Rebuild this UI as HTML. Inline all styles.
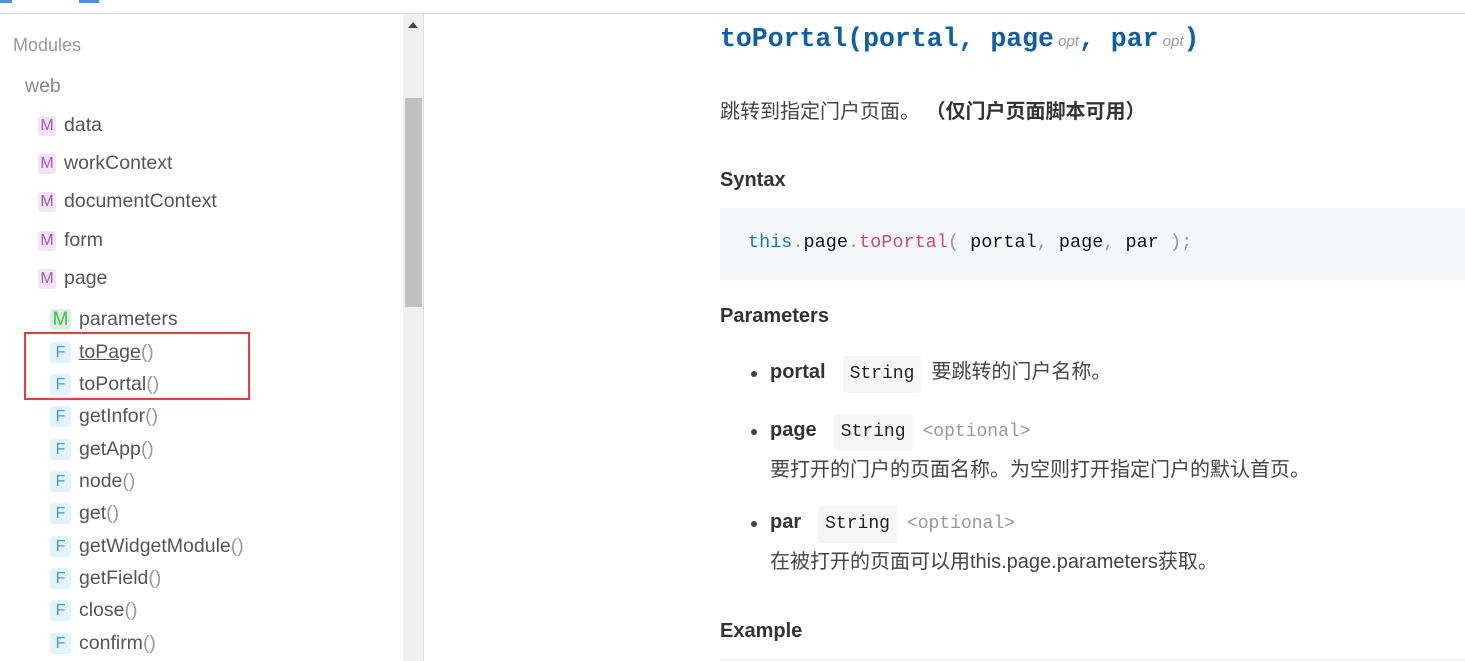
<!DOCTYPE html>
<html><head><meta charset="utf-8"><style>
*{margin:0;padding:0;box-sizing:border-box}
body{width:1465px;height:661px;overflow:hidden;background:#fff;position:relative;font-family:"Liberation Sans","Noto Sans CJK SC",sans-serif;color:#444}
.a{position:absolute;white-space:nowrap}
.top{position:absolute;left:0;top:13px;width:1465px;height:1px;background:#ddd}
.sb{position:absolute;left:403px;top:14px;width:21px;height:647px;background:#f0f0f0;border-right:1px solid #ddd}
.th{position:absolute;left:405px;top:98px;width:17px;height:209px;background:#c1c1c1}
.nav{font-size:19.5px;color:#555}
.ic{display:inline-block;width:18px;height:20px;line-height:20px;text-align:center;font-size:16px;border-radius:3px;margin-right:8px;vertical-align:middle}
.m{background:#f3e3f6;color:#a05cbf}
.mg{background:#d8f2dc;color:#3cba54;width:21px;height:21px;font-size:19px;line-height:21px}
.f{background:#e1f3fc;color:#4a9ad1;width:21px;height:21px;line-height:21px}
.mono{font-family:"Liberation Mono",monospace}
.h{font-size:20px;font-weight:bold;color:#333}
.code{position:absolute;left:720px;top:208px;width:745px;height:72px;background:#f6f7f9}
.tag{display:inline-block;background:#f6f6f6;border-radius:3px;padding:0 7px;font-family:"Liberation Mono",monospace;font-size:18px;height:37px;line-height:37px;color:#222;margin:0 10px 0 17px}
.opt{font-family:"Liberation Mono",monospace;font-size:18px;color:#999}
.dot{position:absolute;width:6px;height:6px;border-radius:3px;background:#444}
.cn{font-size:20px}
</style></head><body>
<div class="a" style="left:0;top:0;width:12px;height:3px;background:#4a90e2"></div>
<div class="a" style="left:79px;top:0;width:20px;height:3px;background:#4a90e2"></div>
<div class="top"></div>
<div class="sb"></div><div class="th"></div>
<div class="a" style="left:408px;top:22px;width:0;height:0;border-left:5px solid transparent;border-right:5px solid transparent;border-bottom:6px solid #444"></div>

<div class="a" style="left:13px;top:35px;font-size:18px;color:#999">Modules</div>
<div class="a" style="left:25px;top:75px;font-size:19.5px;color:#888">web</div>
<div class="a nav" style="left:38px;top:114px"><span class="ic m">M</span>data</div>
<div class="a nav" style="left:38px;top:152px"><span class="ic m">M</span>workContext</div>
<div class="a nav" style="left:38px;top:190px"><span class="ic m">M</span>documentContext</div>
<div class="a nav" style="left:38px;top:229px"><span class="ic m">M</span>form</div>
<div class="a nav" style="left:38px;top:267px"><span class="ic m">M</span>page</div>
<div class="a nav" style="left:50px;top:308px"><span class="ic mg">M</span>parameters</div>
<div class="a" style="left:24px;top:332px;width:226px;height:68px;border:2px solid #f03a3a"></div>
<div class="a nav" style="left:50px;top:341px"><span class="ic f">F</span><u>toPage</u><span style="color:#999">()</span></div>
<div class="a nav" style="left:50px;top:373px"><span class="ic f">F</span>toPortal<span style="color:#999">()</span></div>
<div class="a nav" style="left:50px;top:405px"><span class="ic f">F</span>getInfor<span style="color:#999">()</span></div>
<div class="a nav" style="left:50px;top:438px"><span class="ic f">F</span>getApp<span style="color:#999">()</span></div>
<div class="a nav" style="left:50px;top:470px"><span class="ic f">F</span>node<span style="color:#999">()</span></div>
<div class="a nav" style="left:50px;top:502px"><span class="ic f">F</span>get<span style="color:#999">()</span></div>
<div class="a nav" style="left:50px;top:535px"><span class="ic f">F</span>getWidgetModule<span style="color:#999">()</span></div>
<div class="a nav" style="left:50px;top:567px"><span class="ic f">F</span>getField<span style="color:#999">()</span></div>
<div class="a nav" style="left:50px;top:599px"><span class="ic f">F</span>close<span style="color:#999">()</span></div>
<div class="a nav" style="left:50px;top:632px"><span class="ic f">F</span>confirm<span style="color:#999">()</span></div>

<div class="a mono" style="left:720px;top:24px;font-size:26.5px;font-weight:bold;color:#0f5ea8">toPortal(portal, page<span style="font-size:15px;font-weight:normal;font-style:italic;color:#999;font-family:'Liberation Sans',sans-serif"> opt</span>, par<span style="font-size:15px;font-weight:normal;font-style:italic;color:#999;font-family:'Liberation Sans',sans-serif"> opt</span>)</div>
<div class="a cn" style="left:720px;top:95px;color:#444">跳转到指定门户页面。 <b style="color:#333">（仅门户页面脚本可用）</b></div>
<div class="a h" style="left:720px;top:169px">Syntax</div>
<div class="code"></div>
<div class="a mono" style="left:748px;top:232px;font-size:18.5px;color:#111"><span style="color:#1b7aa6">this</span><span style="color:#999">.</span>page<span style="color:#999">.</span><span style="color:#d14a6a">toPortal</span><span style="color:#999">(</span> portal<span style="color:#999">,</span> page<span style="color:#999">,</span> par <span style="color:#999">);</span></div>
<div class="a h" style="left:720px;top:305px">Parameters</div>

<div class="dot" style="left:751px;top:371px"></div>
<div class="a cn" style="left:770px;top:354px;line-height:37px"><b style="color:#333">portal</b><span class="tag">String</span>要跳转的门户名称。</div>
<div class="dot" style="left:751px;top:429px"></div>
<div class="a cn" style="left:770px;top:412px;line-height:37px"><b style="color:#333">page</b><span class="tag">String</span><span class="opt">&lt;optional&gt;</span></div>
<div class="a cn" style="left:770px;top:453px">要打开的门户的页面名称。为空则打开指定门户的默认首页。</div>
<div class="dot" style="left:751px;top:521px"></div>
<div class="a cn" style="left:770px;top:504px;line-height:37px"><b style="color:#333">par</b><span class="tag">String</span><span class="opt">&lt;optional&gt;</span></div>
<div class="a cn" style="left:770px;top:545px">在被打开的页面可以用this.page.parameters获取。</div>
<div class="a h" style="left:720px;top:620px">Example</div>
<div class="a" style="left:720px;top:659px;width:745px;height:2px;background:#f3f3f3"></div>
</body></html>
